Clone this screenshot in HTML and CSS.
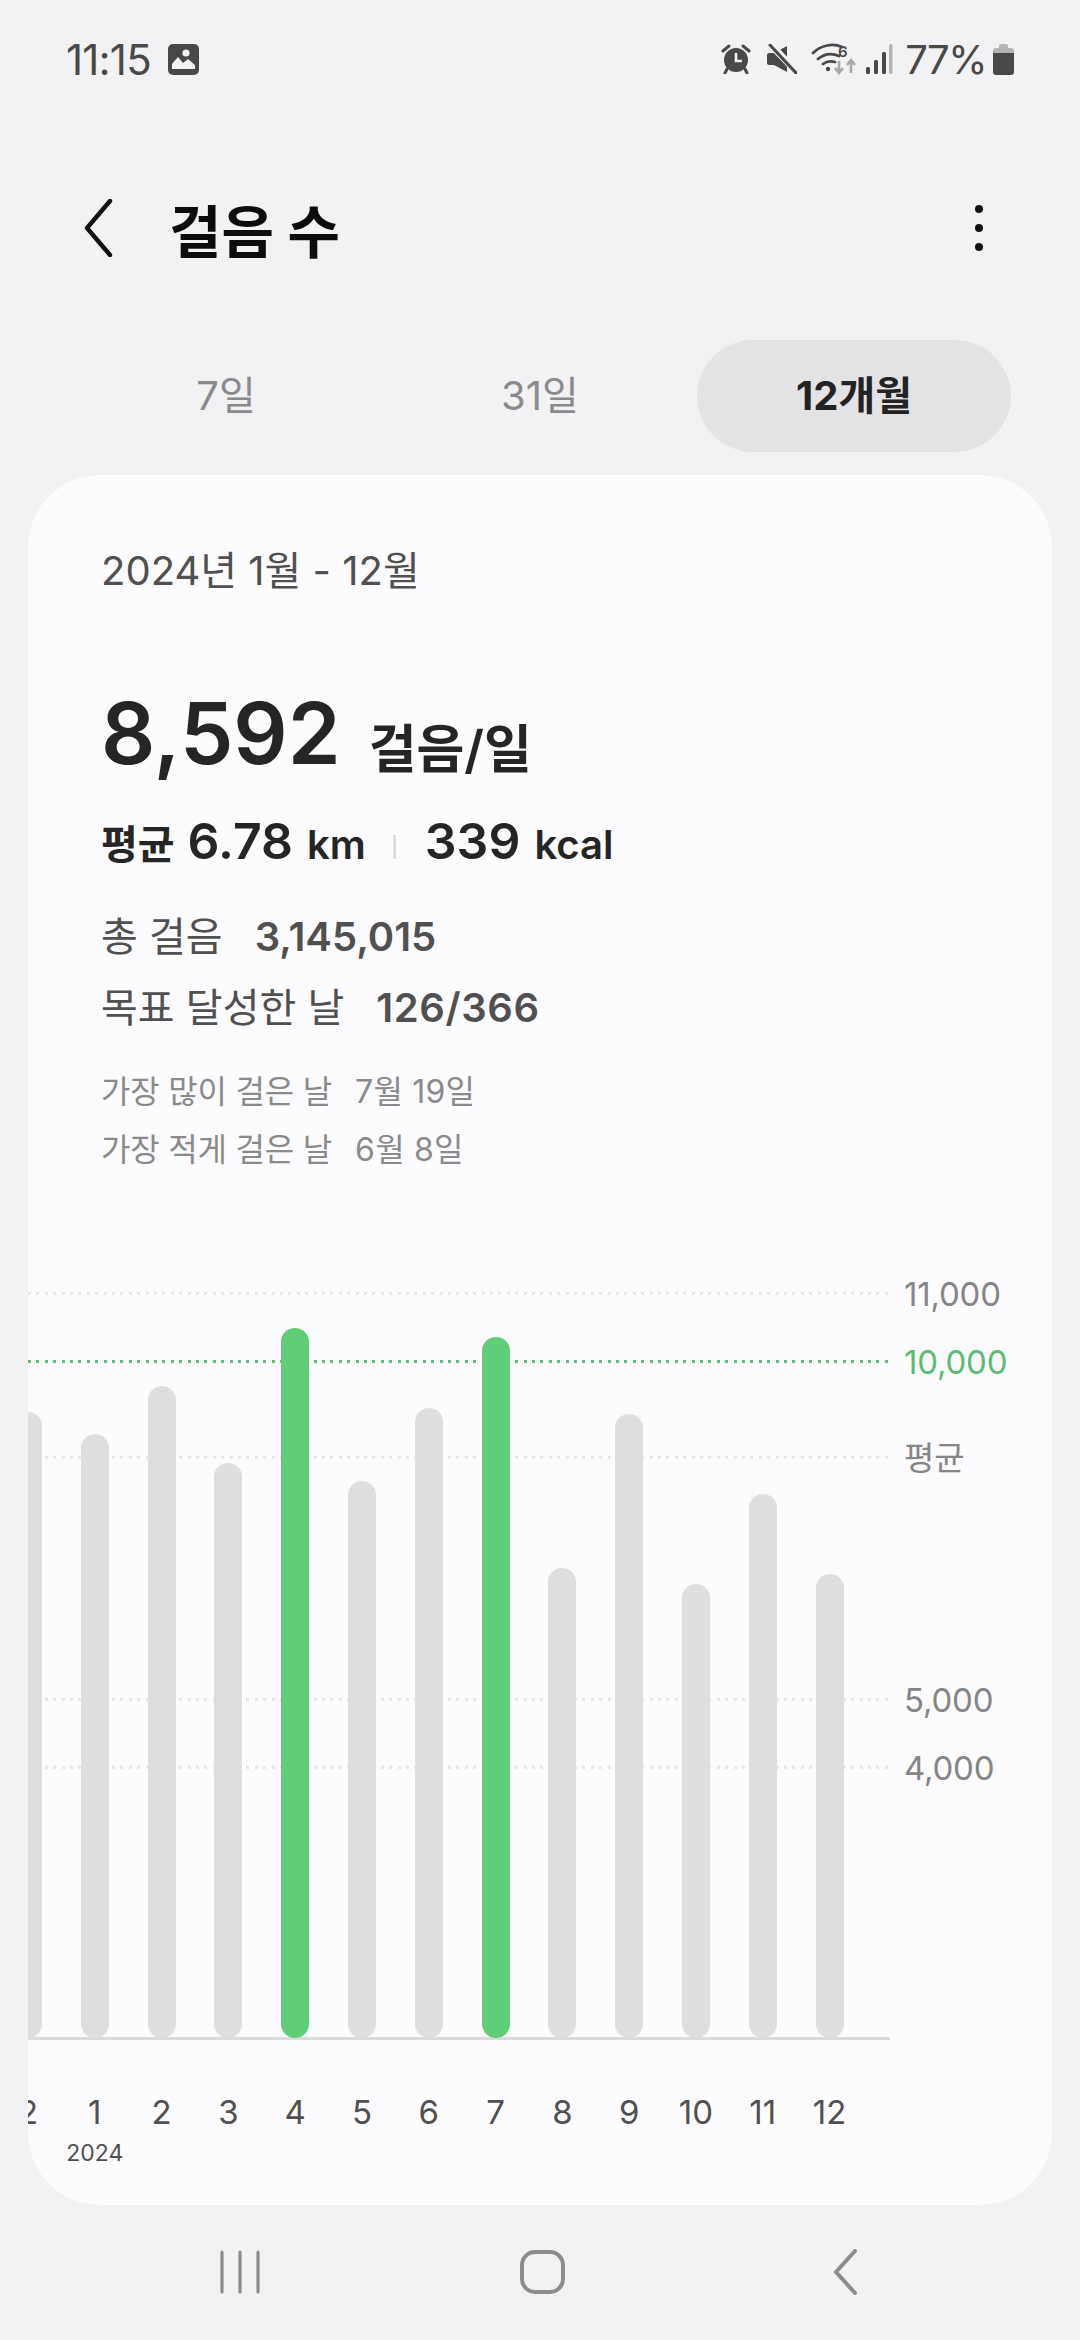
FILE: index.html
```html
<!DOCTYPE html>
<html lang="ko">

<head>
    <meta charset="UTF-8">
    <meta name="viewport" content="width=device-width, initial-scale=1.0">
    <title>걸음 수</title>
    <link rel="stylesheet" href="styles.css">
</head>

<body>
    <div class="status">
        <div class="status-side">
            <span class="clock">11:15</span>
            <svg class="ic-gallery" viewBox="0 0 31 31"><rect width="31" height="31" rx="5" fill="#484848"/><circle cx="18" cy="9" r="3.6" fill="#f2f2f4"/><path d="M4 25v-5l6-7 5 6 5-4 7 6v4z" fill="#f2f2f4"/></svg>
        </div>
        <div class="status-side">
            <svg class="ic-alarm" viewBox="0 0 30 30"><circle cx="15" cy="16" r="12" fill="#484848"/><path d="M15 9v8h6" fill="none" stroke="#f2f2f4" stroke-width="2.6"/><path d="M2 7l6-5M28 7l-6-5" stroke="#484848" stroke-width="3" stroke-linecap="round"/><path d="M6 25l-2 4M24 25l2 4" stroke="#484848" stroke-width="3" stroke-linecap="round"/></svg>
            <svg class="ic-mute" viewBox="0 0 30 30"><path d="M0 11a2 2 0 0 1 2-2h5L20 2v26L7 21H2a2 2 0 0 1-2-2z" fill="#484848"/><path d="M2 -1l29 30" stroke="#f2f2f4" stroke-width="7"/><path d="M3 1l26 28" stroke="#484848" stroke-width="3" stroke-linecap="round"/></svg>
            <svg class="ic-wifi" viewBox="0 0 48 32"><path d="M2 10C10 2 22 0 31 4M7 16c6-5 14-6 21-3M12 21c4-3 8-3 12-2" fill="none" stroke="#484848" stroke-width="2.8" stroke-linecap="round"/><circle cx="17" cy="26" r="2.2" fill="#484848"/><text x="27" y="14" class="wifi-six">6</text><path d="M28 18v11M24 25l4 5 4-5" fill="none" stroke="#a8a8a8" stroke-width="2.6"/><path d="M40 30V18M36 22l4-5 4 5" fill="none" stroke="#a8a8a8" stroke-width="2.6"/></svg>
            <svg class="ic-signal" viewBox="0 0 28 32"><rect x="1" y="24" width="4" height="7" rx="1.5" fill="#484848"/><rect x="9" y="17" width="4" height="14" rx="1.5" fill="#484848"/><rect x="17" y="9" width="4" height="22" rx="1.5" fill="#484848"/><rect x="24" y="1" width="3.5" height="30" rx="1.5" fill="#b4b4b4"/></svg>
            <span class="battery-text">77%</span>
            <svg class="ic-battery" viewBox="0 0 21 32"><path d="M6 3a2 2 0 0 1 2-2h5a2 2 0 0 1 2 2v2h3a3 3 0 0 1 3 3v2H0V8a3 3 0 0 1 3-3h3z" fill="#b4b4b4"/><path d="M0 10h21v19a3 3 0 0 1-3 3H3a3 3 0 0 1-3-3z" fill="#484848"/></svg>
        </div>
    </div>

    <div class="header">
        <svg class="ic-back" viewBox="0 0 30 58"><path d="M27 2L4 29l23 27" fill="none" stroke="#111" stroke-width="4.4" stroke-linecap="round" stroke-linejoin="round"/></svg>
        <h1 class="title">걸음 수</h1>
        <div class="more"><i></i><i></i><i></i></div>
    </div>

    <div class="tabs">
        <div class="tab">7일</div>
        <div class="tab">31일</div>
        <div class="tab active">12개월</div>
    </div>

    <div class="card">
        <div class="summary">
            <div class="range">2024년 1월 - 12월</div>
            <div class="daily"><span class="daily-num">8,592</span><span class="daily-unit">걸음/일</span></div>
            <div class="avg">
                <span class="avg-label">평균</span>
                <span class="avg-num">6.78</span>
                <span class="avg-unit">km</span>
                <span class="avg-sep"></span>
                <span class="avg-num">339</span>
                <span class="avg-unit">kcal</span>
            </div>
            <div class="total"><span>총 걸음</span><b>3,145,015</b></div>
            <div class="total"><span>목표 달성한 날</span><b class="wide">126/366</b></div>
            <div class="note first"><span>가장 많이 걸은 날</span><span class="note-date">7월 19일</span></div>
            <div class="note"><span>가장 적게 걸은 날</span><span class="note-date">6월 8일</span></div>
        </div>

        <div class="chart">
            <div class="plot">
                <div class="line" style="top: 22px"></div>
                <div class="line goal" style="top: 90px"></div>
                <div class="line" style="top: 186px"></div>
                <div class="line" style="top: 428px"></div>
                <div class="line" style="top: 496px"></div>

                <div class="line-label" style="top: 22px">11,000</div>
                <div class="line-label goal" style="top: 90px">10,000</div>
                <div class="line-label" style="top: 186px">평균</div>
                <div class="line-label" style="top: 428px">5,000</div>
                <div class="line-label" style="top: 496px">4,000</div>

                <div class="bars">
                    <div class="bar" style="height: 626px"></div>
                    <div class="bar" style="height: 604px"></div>
                    <div class="bar" style="height: 652px"></div>
                    <div class="bar" style="height: 575px"></div>
                    <div class="bar hit" style="height: 710px"></div>
                    <div class="bar" style="height: 557px"></div>
                    <div class="bar" style="height: 630px"></div>
                    <div class="bar hit" style="height: 701px"></div>
                    <div class="bar" style="height: 470px"></div>
                    <div class="bar" style="height: 624px"></div>
                    <div class="bar" style="height: 454px"></div>
                    <div class="bar" style="height: 544px"></div>
                    <div class="bar" style="height: 464px"></div>
                </div>
            </div>
            <div class="months">
                <div class="month">2</div>
                <div class="month">1<span class="year">2024</span></div>
                <div class="month">2</div>
                <div class="month">3</div>
                <div class="month">4</div>
                <div class="month">5</div>
                <div class="month">6</div>
                <div class="month">7</div>
                <div class="month">8</div>
                <div class="month">9</div>
                <div class="month">10</div>
                <div class="month">11</div>
                <div class="month">12</div>
            </div>
        </div>
    </div>

    <div class="nav">
        <svg class="nav-recent" viewBox="0 0 40 44"><path d="M2 2v40M20 2v40M38 2v40" stroke="#8c8c8e" stroke-width="3.2" stroke-linecap="round"/></svg>
        <svg class="nav-home" viewBox="0 0 45 44"><rect x="2" y="2" width="41" height="40" rx="13" fill="none" stroke="#8c8c8e" stroke-width="4"/></svg>
        <svg class="nav-back" viewBox="0 0 24 46"><path d="M22 2L3 23l19 21" fill="none" stroke="#8c8c8e" stroke-width="4" stroke-linecap="round" stroke-linejoin="round"/></svg>
    </div>
</body>

</html>
```

FILE: styles.css
```css
* {
    margin: 0;
    box-sizing: border-box;
}

body {
    width: 1080px;
    height: 2340px;
    background-color: #f2f2f4;
    font-family: Inter, "Noto Sans CJK KR", sans-serif;
    color: #252525;
    overflow: hidden;
}

/* status bar */
.status {
    display: flex;
    justify-content: space-between;
    align-items: center;
    height: 118px;
    padding: 0 66px;
    color: #484848;
    font-size: 40px;
}

.status-side {
    display: flex;
    align-items: center;
}

.clock {
    font-size: 42px;
    letter-spacing: -0.8px;
}

.ic-gallery {
    width: 31px;
    height: 31px;
    margin-left: 17px;
}

.ic-alarm {
    width: 30px;
    height: 30px;
}

.ic-mute {
    width: 30px;
    height: 30px;
    margin-left: 16px;
}

.ic-wifi {
    width: 48px;
    height: 32px;
    margin-left: 14px;
}

.wifi-six {
    font-family: Inter, sans-serif;
    font-size: 15px;
    font-weight: 600;
    fill: #484848;
}

.ic-signal {
    width: 28px;
    height: 32px;
    margin-left: 6px;
}

.battery-text {
    margin-left: 12px;
    letter-spacing: -1.5px;
}

.ic-battery {
    width: 21px;
    height: 32px;
    margin-left: 7px;
}

/* header */
.header {
    display: flex;
    align-items: center;
    height: 110px;
    margin-top: 55px;
    padding: 0 83px;
}

.ic-back {
    width: 30px;
    height: 58px;
}

.title {
    margin-left: 56px;
    font-size: 57px;
    font-weight: 700;
    color: #0c0c0c;
}

.more {
    display: flex;
    flex-direction: column;
    gap: 11px;
    margin-left: auto;
    margin-right: 14px;
}

.more i {
    width: 8px;
    height: 8px;
    border-radius: 50%;
    background: #111;
}

/* tabs */
.tabs {
    display: flex;
    height: 112px;
    margin-top: 57px;
    padding: 0 69px;
}

.tab {
    flex: 1;
    display: flex;
    align-items: center;
    justify-content: center;
    padding-bottom: 6px;
    border-radius: 56px;
    font-size: 40px;
    color: #8a8a8a;
}

.tab.active {
    background: #e3e3e5;
    color: #232323;
    font-weight: 700;
}

/* card */
.card {
    height: 1730px;
    margin: 23px 28px 0;
    border-radius: 72px;
    background: #fcfcfe;
    overflow: hidden;
}

.summary {
    height: 795px;
    padding: 71px 73px 0;
}

.range {
    font-size: 40px;
    line-height: 50px;
    color: #505050;
}

.daily {
    height: 110px;
    margin-top: 83px;
    line-height: 110px;
}

.daily-num {
    font-size: 85px;
    font-weight: 600;
}

.daily-unit {
    margin-left: 28px;
    font-size: 52px;
    font-weight: 600;
    vertical-align: -4px;
}

.avg {
    display: flex;
    align-items: baseline;
    margin-top: 20px;
    line-height: 64px;
}

.avg-label {
    font-size: 40px;
    font-weight: 700;
}

.avg-num {
    margin-left: 13px;
    font-size: 50px;
    font-weight: 600;
}

.avg-unit {
    margin-left: 14px;
    font-size: 40px;
    font-weight: 600;
}

.avg-sep {
    width: 3px;
    height: 24px;
    margin: 0 16px 0 27px;
    background: #dcdcde;
}

.total {
    display: flex;
    gap: 32px;
    color: #505050;
    font-size: 40px;
    line-height: 71px;
}

.avg + .total {
    margin-top: 24px;
}

.total b {
    font-weight: 600;
}

.total b.wide {
    letter-spacing: 0.6px;
}

.note {
    display: flex;
    gap: 23px;
    color: #8a8a8a;
    font-size: 32px;
    letter-spacing: -0.2px;
    line-height: 58px;
}

.note-date {
    letter-spacing: 0.2px;
}

.note.first {
    margin-top: 20px;
}

/* chart */
.chart {
    height: 935px;
}

.plot {
    position: relative;
    height: 768px;
}

.line {
    position: absolute;
    left: 0;
    width: 862px;
    height: 3px;
    background: repeating-linear-gradient(90deg, #e6e6e8 0 3px, transparent 3px 8.4px);
}

.line.goal {
    background: repeating-linear-gradient(90deg, #62b97a 0 3px, transparent 3px 8.4px);
}

.line-label {
    position: absolute;
    left: 876px;
    font-size: 33px;
    letter-spacing: -0.2px;
    line-height: 40px;
    color: #858585;
    transform: translateY(-18px);
}

.line-label.goal {
    color: #5cba74;
}

.bars {
    position: absolute;
    left: -14px;
    right: 0;
    bottom: 0;
    height: 100%;
    display: flex;
    align-items: flex-end;
    gap: 38.8px;
}

.bars::after {
    content: "";
    position: absolute;
    left: 14px;
    bottom: -2px;
    width: 862px;
    height: 3px;
    background: #dadadc;
}

.bar {
    position: relative;
    z-index: 1;
    width: 28px;
    flex: none;
    border-radius: 14px;
    background: #dedee0;
}

.bar.hit {
    background: #60cd79;
}

.months {
    display: flex;
    gap: 38.8px;
    margin-left: -14px;
    padding-top: 54px;
}

.month {
    display: flex;
    flex-direction: column;
    align-items: center;
    width: 28px;
    flex: none;
    font-size: 33px;
    line-height: 40px;
    color: #505050;
}

.year {
    margin-top: 6px;
    font-size: 23px;
    line-height: 30px;
}

/* bottom nav */
.nav {
    display: flex;
    align-items: center;
    height: 133px;
}

.nav-recent {
    width: 40px;
    height: 44px;
    margin-left: 220px;
}

.nav-home {
    width: 45px;
    height: 44px;
    margin-left: 260px;
}

.nav-back {
    width: 24px;
    height: 46px;
    margin-left: 268px;
}
```
